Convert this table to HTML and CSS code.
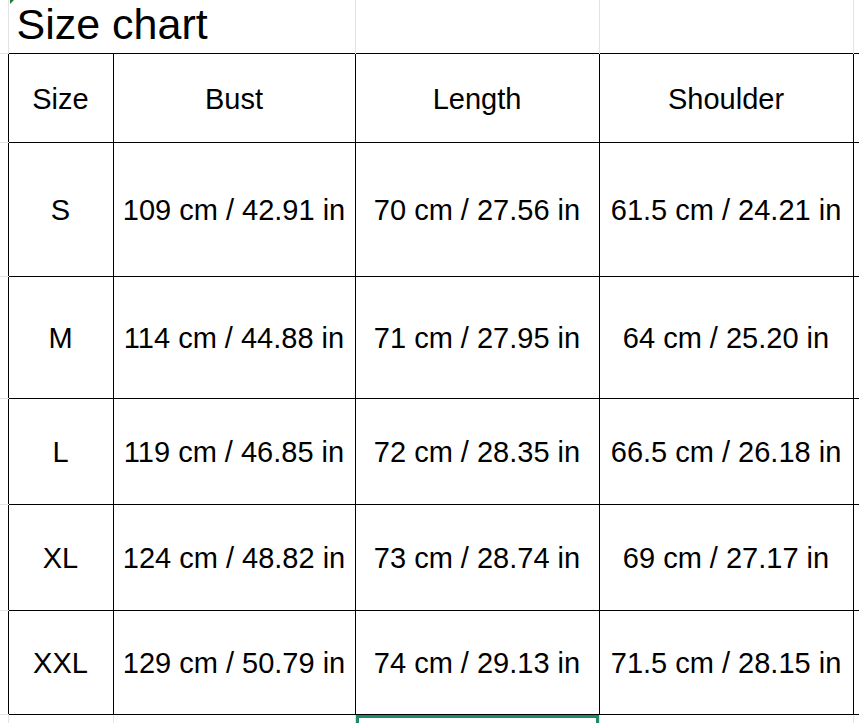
FILE: index.html
```html
<!DOCTYPE html>
<html lang="en">
<head>
<meta charset="utf-8">
<title>Size chart</title>
<link rel="stylesheet" href="styles.css">
</head>
<body>
<table class="sheet">
  <colgroup>
    <col class="c-gut">
    <col class="c-size">
    <col class="c-bust">
    <col class="c-len">
    <col class="c-sh">
    <col class="c-tail">
  </colgroup>
  <tr class="r-title">
    <td class="gut"></td>
    <td class="title" colspan="2">Size chart</td>
    <td class="blank"></td>
    <td class="blank"></td>
    <td class="blank-tail"></td>
  </tr>
  <tr class="r-head">
    <td class="gut"></td>
    <td class="cell">Size</td>
    <td class="cell">Bust</td>
    <td class="cell">Length</td>
    <td class="cell">Shoulder</td>
    <td class="tail"></td>
  </tr>
  <tr class="r-s">
    <td class="gut"></td>
    <td class="cell">S</td>
    <td class="cell">109 cm / 42.91 in</td>
    <td class="cell">70 cm / 27.56 in</td>
    <td class="cell">61.5 cm / 24.21 in</td>
    <td class="tail"></td>
  </tr>
  <tr class="r-m">
    <td class="gut"></td>
    <td class="cell">M</td>
    <td class="cell">114 cm / 44.88 in</td>
    <td class="cell">71 cm / 27.95 in</td>
    <td class="cell">64 cm / 25.20 in</td>
    <td class="tail"></td>
  </tr>
  <tr class="r-l">
    <td class="gut"></td>
    <td class="cell">L</td>
    <td class="cell">119 cm / 46.85 in</td>
    <td class="cell">72 cm / 28.35 in</td>
    <td class="cell">66.5 cm / 26.18 in</td>
    <td class="tail"></td>
  </tr>
  <tr class="r-xl">
    <td class="gut"></td>
    <td class="cell">XL</td>
    <td class="cell">124 cm / 48.82 in</td>
    <td class="cell">73 cm / 28.74 in</td>
    <td class="cell">69 cm / 27.17 in</td>
    <td class="tail"></td>
  </tr>
  <tr class="r-xxl">
    <td class="gut"></td>
    <td class="cell">XXL</td>
    <td class="cell">129 cm / 50.79 in</td>
    <td class="cell">74 cm / 29.13 in</td>
    <td class="cell">71.5 cm / 28.15 in</td>
    <td class="tail"></td>
  </tr>
  <tr class="r-extra">
    <td class="gut"></td>
    <td class="empty"></td>
    <td class="empty"></td>
    <td class="empty selected"></td>
    <td class="empty"></td>
    <td class="blank-tail"></td>
  </tr>
</table>
</body>
</html>
```
FILE: styles.css
```css
html, body {
  margin: 0;
  padding: 0;
  background: #ffffff;
  overflow: hidden;
}

.sheet {
  border-collapse: collapse;
  table-layout: fixed;
  width: 859px;
  font-family: "Liberation Sans", Arial, sans-serif;
  color: #000000;
}

.c-gut { width: 8px; }
.c-size { width: 105px; }
.c-bust { width: 242px; }
.c-len { width: 244px; }
.c-sh { width: 254px; }
.c-tail { width: 6px; }

.sheet td {
  padding: 0;
}

.gut {
  border-bottom: 1px solid #e3e3e3;
}

.title {
  position: relative;
  font-size: 43px;
  line-height: 43px;
  text-align: left;
  vertical-align: bottom;
  padding: 0 0 7px 8px !important;
  white-space: nowrap;
  border-left: 1px solid #e3e3e3;
  border-right: 1px solid #e3e3e3;
}

.title::before {
  content: "";
  position: absolute;
  left: 1px;
  top: 0;
  border-top: 4px solid #1e7d2e;
  border-right: 4px solid transparent;
}

.blank {
  border-right: 1px solid #e3e3e3;
}

.cell {
  border: 1px solid #000000;
  font-size: 29px;
  text-align: center;
  vertical-align: middle;
  white-space: nowrap;
  padding-top: 2px !important;
}

.tail {
  border-top: 1px solid #000000;
  border-bottom: 1px solid #000000;
}

.r-title td { height: 46px; }
.r-head td { height: 86px; }
.r-s td { height: 131px; }
.r-m td { height: 119px; }
.r-l td { height: 103px; }
.r-xl td { height: 103px; }
.r-xxl td { height: 101px; }
.r-head .gut, .r-head .tail { height: 88px; }
.r-s .gut, .r-s .tail { height: 133px; }
.r-m .gut, .r-m .tail { height: 121px; }
.r-l .gut, .r-l .tail { height: 105px; }
.r-xl .gut, .r-xl .tail { height: 105px; }
.r-xxl .gut, .r-xxl .tail { height: 103px; }
.r-extra td { height: 30px; }

.empty {
  border-left: 1px solid #e3e3e3;
  border-right: 1px solid #e3e3e3;
}

.selected {
  box-shadow: inset 0 3px 0 #1e8b62, inset 3px 0 0 #1e8b62, inset -3px 0 0 #1e8b62;
}
```
